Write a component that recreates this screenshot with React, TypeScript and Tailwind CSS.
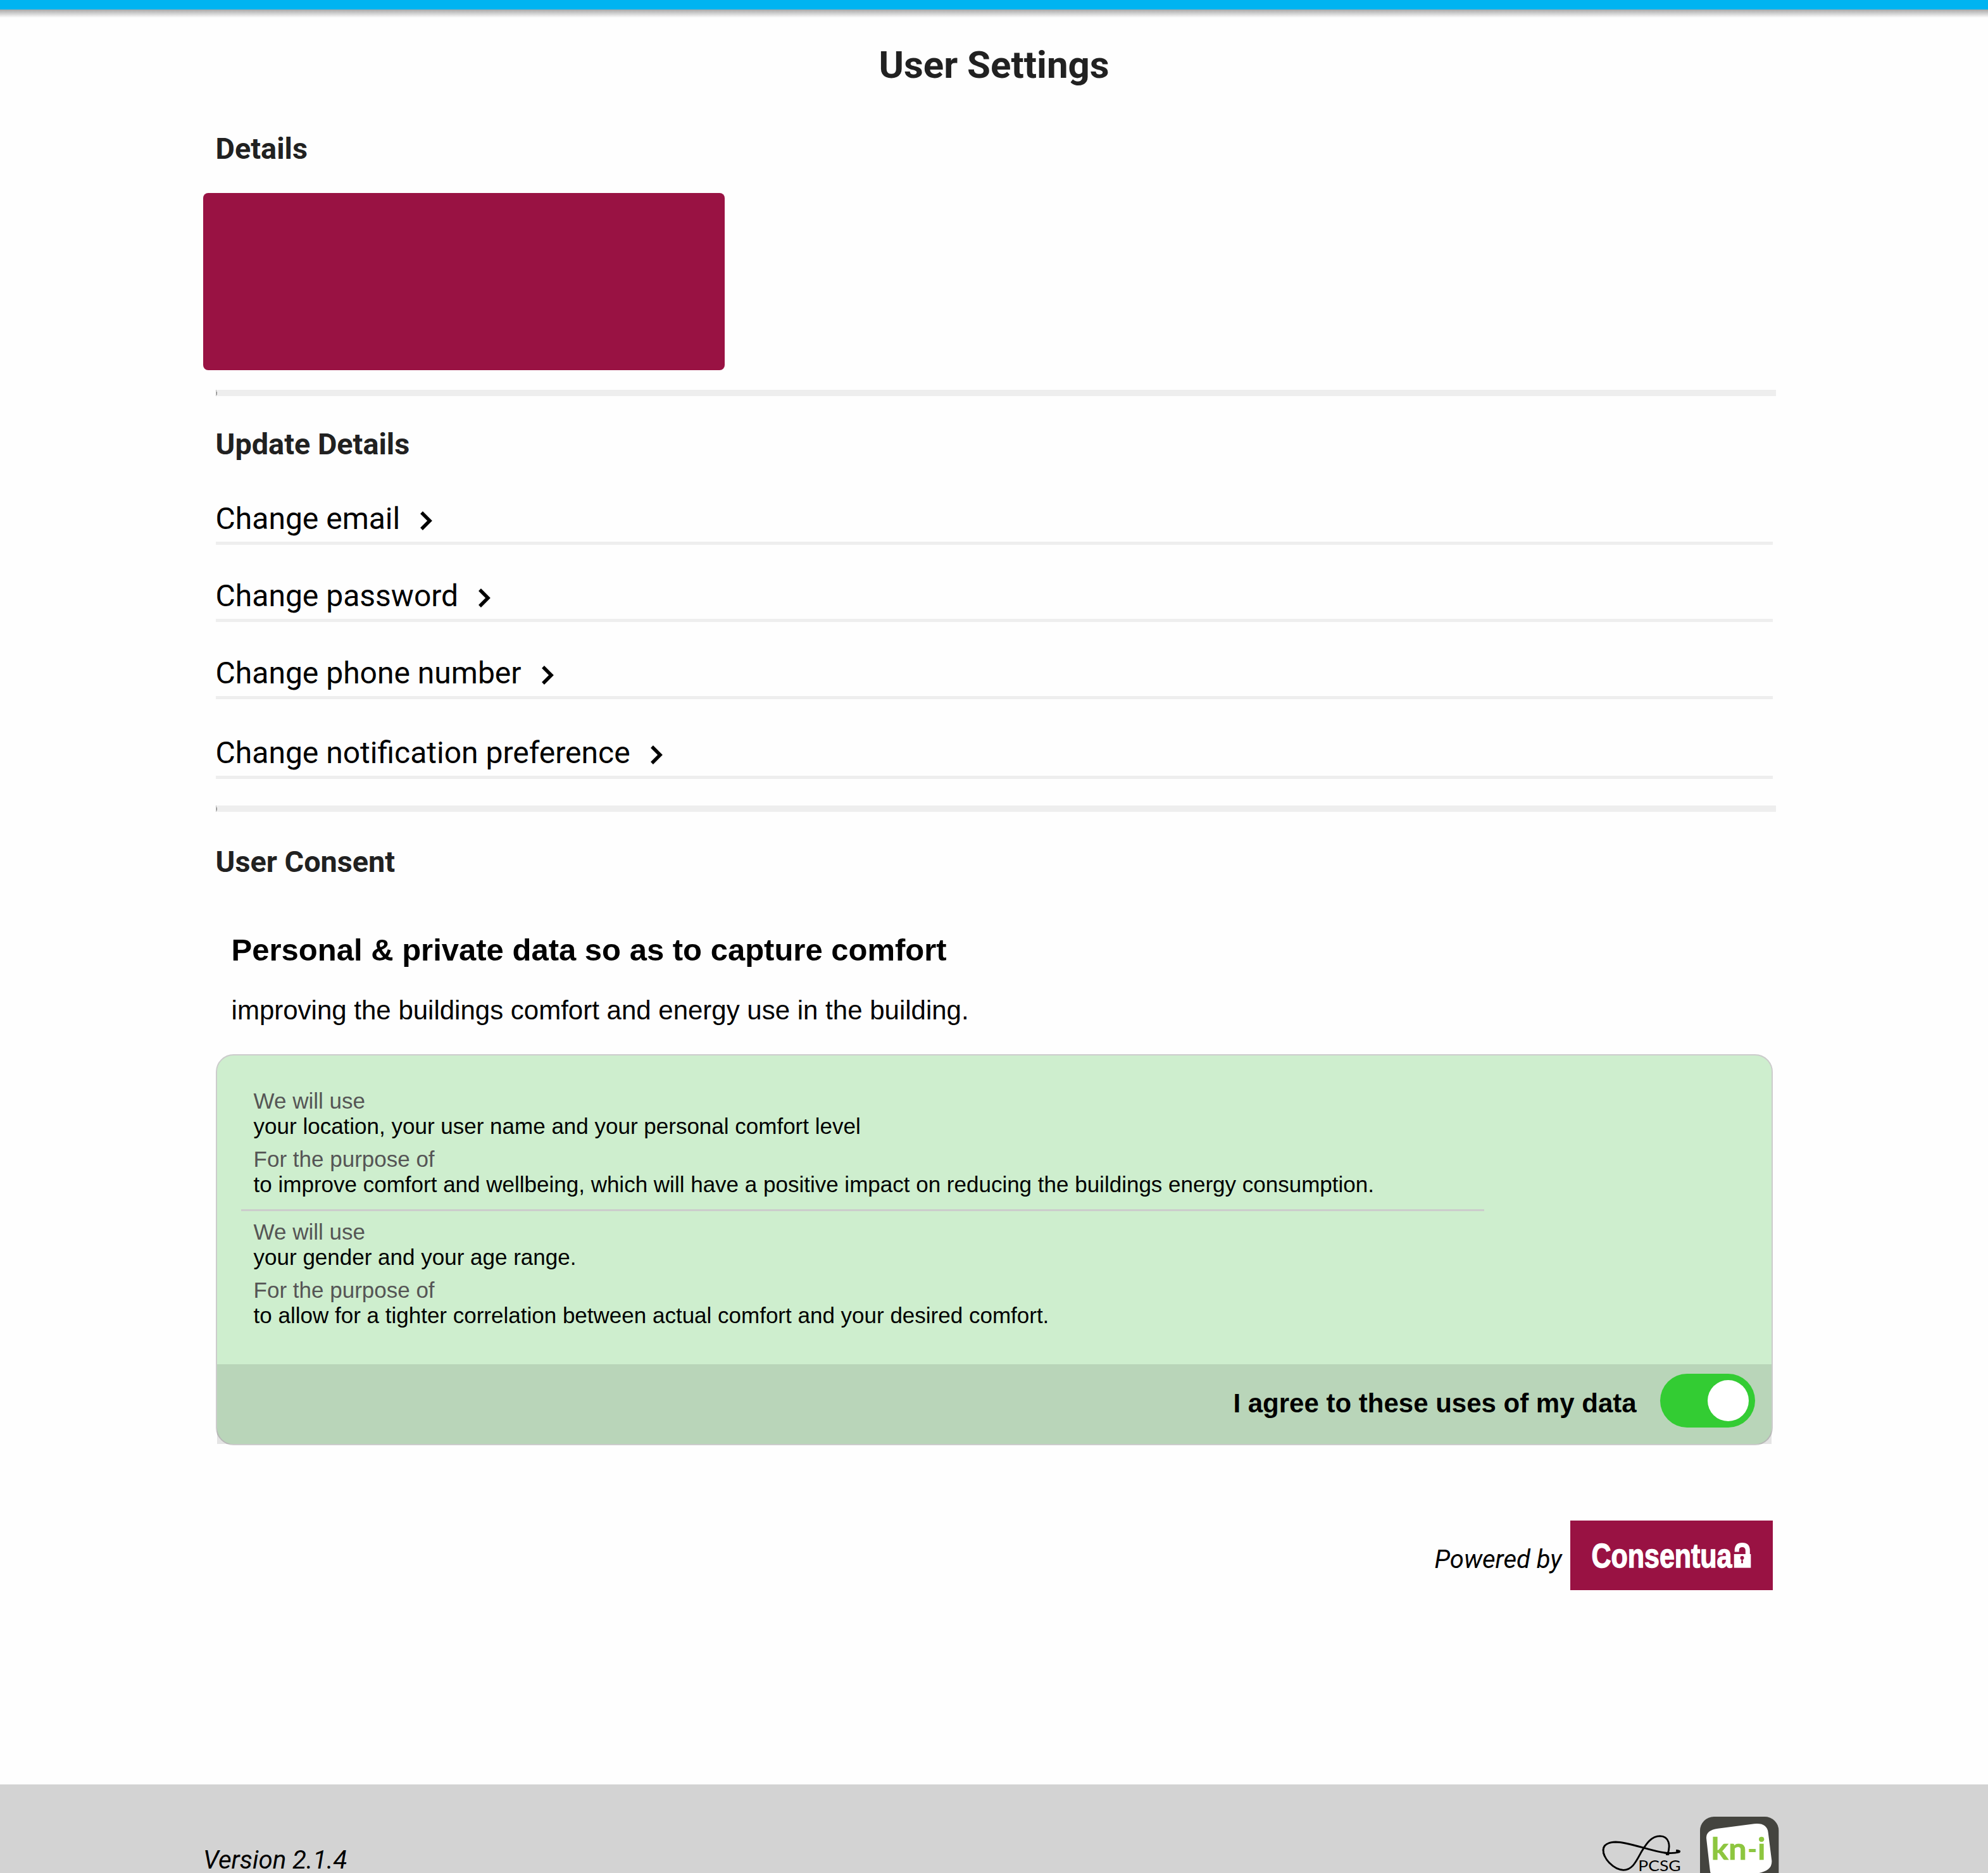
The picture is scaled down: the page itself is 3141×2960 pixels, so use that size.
import React from 'react';

const links = [
  { label: 'Change email', row: 'mt-[62px]' },
  { label: 'Change password', row: 'mt-[52px]' },
  { label: 'Change phone number', row: 'mt-[52px]' },
  { label: 'Change notification preference', row: 'mt-[56px]' },
];

const uses = [
  { use: 'your location, your user name and your personal comfort level', purpose: 'to improve comfort and wellbeing, which will have a positive impact on reducing the buildings energy consumption.' },
  { use: 'your gender and your age range.', purpose: 'to allow for a tighter correlation between actual comfort and your desired comfort.' },
];

function Chevron() {
  return (
    <svg className="mt-1.5 ml-[32px] h-[30px] w-[20px]" viewBox="0 0 20 30" fill="none" stroke="#000" strokeWidth="5.500">
      <path d="M2 2 L15 15 L2 28" />
    </svg>
  );
}

function Divider() {
  return (
    <div className="flex h-[10px] w-[2465px] items-end bg-[#eeeeee]">
      <span className="h-[10px] w-px bg-[#bbbbbb]" />
      <span className="mb-[2px] h-[5px] w-px bg-[#888888]" />
    </div>
  );
}

function ConsentuaLogo() {
  return (
    <div className="h-[110px] w-[320px] bg-[#991243]">
      <svg viewBox="0 0 320 110" className="h-full w-full">
        <text x="33.500" y="74" textLength="222" lengthAdjust="spacingAndGlyphs" fill="#fff" stroke="#fff" strokeWidth="1.400" fontSize="53" fontWeight="700" fontFamily="'Liberation Sans', Arial, sans-serif">Consentua</text>
        <path d="M258.700 53 H285.300 V74.700 H258.700 Z" fill="#fff" />
        <path d="M263.200 49.500 V46.500 Q263.500 38.500 271.700 38.500 Q280.200 38.500 280.300 47.500 V54" fill="none" stroke="#fff" strokeWidth="7" />
        <circle cx="271.500" cy="59" r="3" fill="#991243" />
        <path d="M271.500 59 L272.500 67 H270.500 Z" fill="#991243" stroke="#991243" />
      </svg>
    </div>
  );
}

function PartnerLogos() {
  return (
    <svg viewBox="0 0 900 300" className="mt-[40px] ml-auto h-[100px] w-[300px]">
      <path
        d="M343 215 C360 170 352 126 308 125 C264 125 240 168 220 200 C196 243 178 286 135 286 C88 284 39 232 39 190 C41 164 65 154 98 153 C165 154 255 194 330 204 C360 208 384 205 402 200"
        fill="none"
        stroke="#000"
        strokeWidth="8.500"
      />
      <path d="M48 168 C38 180 36 200 46 220" fill="none" stroke="#000" strokeWidth="8" />
      <path d="M330 204 C345 207 352 206 358 205 M336 212 L352 212" stroke="#000" strokeWidth="7" />
      <path d="M384 190 Q392 187 405 194 V201 L390 206 Q382 198 384 190 Z" fill="#000" />
      <text x="205" y="290" textLength="202" lengthAdjust="spacingAndGlyphs" fontSize="70" fontFamily="Lato, sans-serif">PCSG</text>
      <rect x="498" y="33" width="373" height="373" rx="66" fill="#44443f" />
      <path d="M583 89 L755 67 Q815 61 821 108 L838 242 Q840 284 790 297 L770 302 H549 Q546 295 545 285 L528 136 Q525 97 583 89 Z" fill="#fff" />
      <g fill="#8dc63f" fontSize="146" fontWeight="700" fontFamily="Lato, sans-serif">
        <text x="551" y="236" stroke="#8dc63f" strokeWidth="2" textLength="168" lengthAdjust="spacingAndGlyphs">kn</text>
        <text x="723" y="236" textLength="46" lengthAdjust="spacingAndGlyphs">-</text>
        <text x="771" y="236" stroke="#8dc63f" strokeWidth="2">i</text>
      </g>
    </svg>
  );
}

export default function App() {
  return (
    <div className="h-[2960px] w-full overflow-hidden bg-[#fefefe] font-[Roboto,sans-serif] text-black">
      <header className="h-[15px] bg-[#00b4f1]" />
      <div className="h-[13px] bg-linear-to-b from-[#a8a8a8] to-[#fefefe]" />
      <main className="flex h-[2792px] flex-col px-[340.6px] text-[#212121]">
        <h1 className="mt-[40px] text-center text-[60px] leading-[70px] font-bold">User Settings</h1>
        <h2 className="mt-[70px] text-[46.8px] leading-[54px] font-bold">Details</h2>
        <div className="mt-[43px] -ml-[19.6px] h-[280px] w-[824px] shrink-0 rounded-[8px] bg-[#991243]" />
        <div className="mt-[31px]"><Divider /></div>
        <h2 className="mt-[49px] text-[46.8px] leading-[54px] font-bold">Update Details</h2>
        <nav className="flex flex-col text-black">
          {links.map((l) => (
            <a key={l.label} className={`flex h-[70px] w-[2460px] items-start border-b-[5px] border-[#eeeeee] ${l.row}`}>
              <span className="mt-px text-[48px] leading-[56px]">{l.label}</span>
              <span className="mt-px flex h-[56px] items-center"><Chevron /></span>
            </a>
          ))}
        </nav>
        <div className="mt-[42px]"><Divider /></div>
        <h2 className="mt-[52px] text-[46.8px] leading-[54px] font-bold">User Consent</h2>
        <section className="font-['Liberation_Sans',Arial,sans-serif] text-black">
          <h3 className="mt-[84px] ml-[25px] text-[49px] leading-[56px] font-bold">Personal &amp; private data so as to capture comfort</h3>
          <p className="mt-[44px] ml-[25px] text-[42px] leading-[48px]">improving the buildings comfort and energy use in the building.</p>
          <div className="mt-[44.5px] flex h-[618px] w-[2460px] flex-col rounded-[28px] border-2 border-[#cccccc] bg-[#ceeece]">
            <div className="flex h-[488px] flex-col pt-[52px] text-[35px] leading-[40px]">
              {uses.map((u, i) => (
                <div key={u.use} className={i === 0 ? 'ml-[38px] h-[194px] w-[1964px] border-b-[3px] border-[#cccccc] pl-5' : 'ml-[38px] pt-[13px] pl-5'}>
                  <p className="text-[#555555]">We will use</p>
                  <p>{u.use}</p>
                  <p className="mt-[12.5px] text-[#555555]">For the purpose of</p>
                  <p>{u.purpose}</p>
                </div>
              ))}
            </div>
            <div className="flex h-[126px] items-start justify-end bg-black/10 pt-[15px] pr-[26px]">
              <span className="mt-[23px] mr-[37px] text-[42px] leading-[48px] font-bold">I agree to these uses of my data</span>
              <span className="flex h-[85px] w-[150px] items-center justify-end rounded-full bg-[#33cc33] pr-[10px]">
                <span className="h-[65px] w-[65px] rounded-full bg-white" />
              </span>
            </div>
          </div>
        </section>
        <div className="mt-[119.5px] flex w-[2460px] items-start justify-end">
          <span className="mt-[37.5px] mr-[13px] text-[40px] leading-[47px] text-black italic">Powered by</span>
          <ConsentuaLogo />
        </div>
      </main>
      <footer className="flex h-[140px] items-start bg-[#d3d3d3] pr-[321px] pl-[321px] text-black">
        <span className="mt-[100px] text-[40.2px] leading-[40px] italic">Version 2.1.4</span>
        <PartnerLogos />
      </footer>
    </div>
  );
}
